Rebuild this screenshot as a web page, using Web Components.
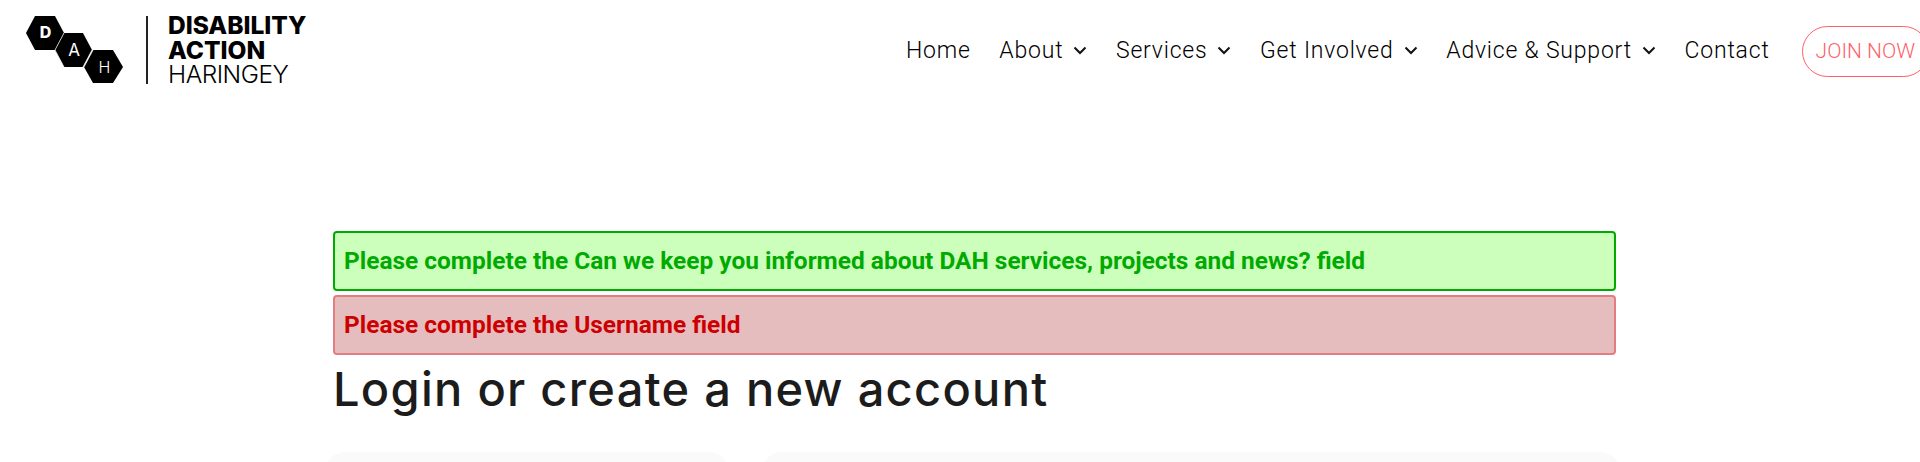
<!DOCTYPE html>
<html>
<head>
<meta charset="utf-8">
<title>Login or create a new account</title>
<style>
  html, body { margin: 0; padding: 0; background: #fff; overflow: hidden; }
  body { height: 462px; font-family: Roboto, "Liberation Sans", sans-serif; }
</style>
</head>
<body>

<site-header>
  <dah-logo slot="logo"></dah-logo>
  <nav-link>Home</nav-link>
  <nav-link has-menu>About</nav-link>
  <nav-link has-menu>Services</nav-link>
  <nav-link has-menu>Get Involved</nav-link>
  <nav-link has-menu>Advice &amp; Support</nav-link>
  <nav-link>Contact</nav-link>
  <join-button slot="action">JOIN NOW</join-button>
</site-header>

<page-main>
  <form-message type="ok">Please complete the Can we keep you informed about DAH services, projects and news? field</form-message>
  <form-message type="error">Please complete the Username field</form-message>
  <page-title>Login or create a new account</page-title>
  <account-panels>
    <account-panel></account-panel>
    <account-panel></account-panel>
  </account-panels>
</page-main>

<script>
class SiteHeader extends HTMLElement {
  constructor() {
    super();
    const shadowRoot = this.attachShadow({mode: 'open'});
    shadowRoot.innerHTML = `
      <style>
        :host { display: flex; align-items: flex-start; height: 100px; padding-left: 26px; overflow: hidden; }
        nav { display: flex; align-items: center; gap: 28.6px; margin-left: auto; height: 100px; }
        .action { display: flex; align-items: center; height: 102px; margin-left: 32px; margin-right: -9px; }
      </style>
      <slot name="logo"></slot>
      <nav><slot></slot></nav>
      <div class="action"><slot name="action"></slot></div>
    `;
  }
}

class DahLogo extends HTMLElement {
  constructor() {
    super();
    const shadowRoot = this.attachShadow({mode: 'open'});
    shadowRoot.innerHTML = `
      <style>
        :host { display: flex; align-items: flex-start; padding-top: 15px; color: #000; }
        svg { display: block; width: 98px; height: 70px; }
        .rule { width: 2px; height: 68px; margin-top: 1px; background: #222; margin-left: 22px; }
        .name { margin-left: 20px; margin-top: -2px; font-family: Inter, "Liberation Sans", sans-serif; font-size: 24.5px; line-height: 24.5px; font-weight: 800; }
        .name span { display: block; font-weight: 300; letter-spacing: -0.5px; }
      </style>
      <svg viewBox="0 0 98 70" aria-hidden="true">
        <path d="M9 1H29L38 18L29 35H9L0 18Z"/>
        <path d="M38 18H57L66 35L57 52H38L29 35Z"/>
        <path d="M67 35H87L97 52L87 68H67L58 52Z"/>
        <path d="M29 35L38 18M57 52L66 35M38 52L29 35M67 35L58 52" stroke="#fff" stroke-width="0.7" fill="none"/>
        <g fill="#fff" text-anchor="middle" font-family="Inter, Liberation Sans, sans-serif" font-size="16">
          <text x="19.5" y="23" font-weight="800">D</text>
          <text x="48" y="41" font-weight="400" font-size="17">A</text>
          <text x="78.5" y="58" font-weight="300">H</text>
        </g>
      </svg>
      <div class="rule"></div>
      <div class="name">DISABILITY<br>ACTION<span>HARINGEY</span></div>
    `;
  }
}

class NavLink extends HTMLElement {
  constructor() {
    super();
    const shadowRoot = this.attachShadow({mode: 'open'});
    shadowRoot.innerHTML = `
      <style>
        :host { display: inline-flex; align-items: center; gap: 10px; font-family: Roboto, sans-serif; font-weight: 300; font-size: 23px; letter-spacing: 0.8px; color: #000; white-space: nowrap; }
        svg { display: block; width: 14px; height: 9px; }
      </style>
      <slot></slot>
      ${this.hasAttribute('has-menu') ? '<svg viewBox="0 0 14 9"><path d="M1.5 1.5L7 7L12.5 1.5" fill="none" stroke="#111" stroke-width="2"/></svg>' : ''}
    `;
  }
}

class JoinButton extends HTMLElement {
  constructor() {
    super();
    const shadowRoot = this.attachShadow({mode: 'open'});
    shadowRoot.innerHTML = `
      <style>
        :host { display: inline-flex; align-items: center; box-sizing: border-box; height: 51px; padding: 0 13px; border: 1px solid #ff5f68; border-radius: 26px; font-family: Roboto, sans-serif; font-weight: 300; font-size: 21px; color: #ff5f68; white-space: nowrap; }
      </style>
      <slot></slot>
    `;
  }
}

class PageMain extends HTMLElement {
  constructor() {
    super();
    const shadowRoot = this.attachShadow({mode: 'open'});
    shadowRoot.innerHTML = `
      <style>
        :host { display: flex; flex-direction: column; box-sizing: border-box; width: 1283px; height: 362px; margin-left: 333px; padding-top: 131px; }
      </style>
      <slot></slot>
    `;
  }
}

class FormMessage extends HTMLElement {
  constructor() {
    super();
    const shadowRoot = this.attachShadow({mode: 'open'});
    const error = this.getAttribute('type') === 'error';
    shadowRoot.innerHTML = `
      <style>
        :host { display: flex; align-items: center; box-sizing: border-box; height: 60px; margin-bottom: 4px; padding: 0 9px 2px; border-radius: 4px; font-family: Roboto, sans-serif; font-weight: 700; font-size: 24.45px;
          border: 2px solid ${error ? '#e37d7f' : '#00aa00'};
          background: ${error ? '#e6bdbf' : '#ccffbb'};
          color: ${error ? '#cc0000' : '#00aa00'}; }
      </style>
      <slot></slot>
    `;
  }
}

class PageTitle extends HTMLElement {
  constructor() {
    super();
    const shadowRoot = this.attachShadow({mode: 'open'});
    shadowRoot.innerHTML = `
      <style>
        :host { display: block; margin-top: -4px; font-family: Inter, "Open Sans", sans-serif; font-weight: 500; font-size: 47px; letter-spacing: 1.28px; line-height: 68px; color: #1c1c1c; }
        h1 { margin: 0; font: inherit; }
      </style>
      <h1><slot></slot></h1>
    `;
  }
}

class AccountPanels extends HTMLElement {
  constructor() {
    super();
    const shadowRoot = this.attachShadow({mode: 'open'});
    shadowRoot.innerHTML = `
      <style>
        :host { display: grid; grid-template-columns: 404px 1fr; column-gap: 33px; margin: 29px -4px 0 -8px; height: 10px; overflow: hidden; }
      </style>
      <slot></slot>
    `;
  }
}

class AccountPanel extends HTMLElement {
  constructor() {
    super();
    const shadowRoot = this.attachShadow({mode: 'open'});
    shadowRoot.innerHTML = `
      <style>
        :host { display: block; height: 60px; background: #fafafa; border-radius: 20px; }
      </style>
    `;
  }
}

customElements.define('site-header', SiteHeader);
customElements.define('dah-logo', DahLogo);
customElements.define('nav-link', NavLink);
customElements.define('join-button', JoinButton);
customElements.define('page-main', PageMain);
customElements.define('form-message', FormMessage);
customElements.define('page-title', PageTitle);
customElements.define('account-panels', AccountPanels);
customElements.define('account-panel', AccountPanel);
</script>
</body>
</html>
